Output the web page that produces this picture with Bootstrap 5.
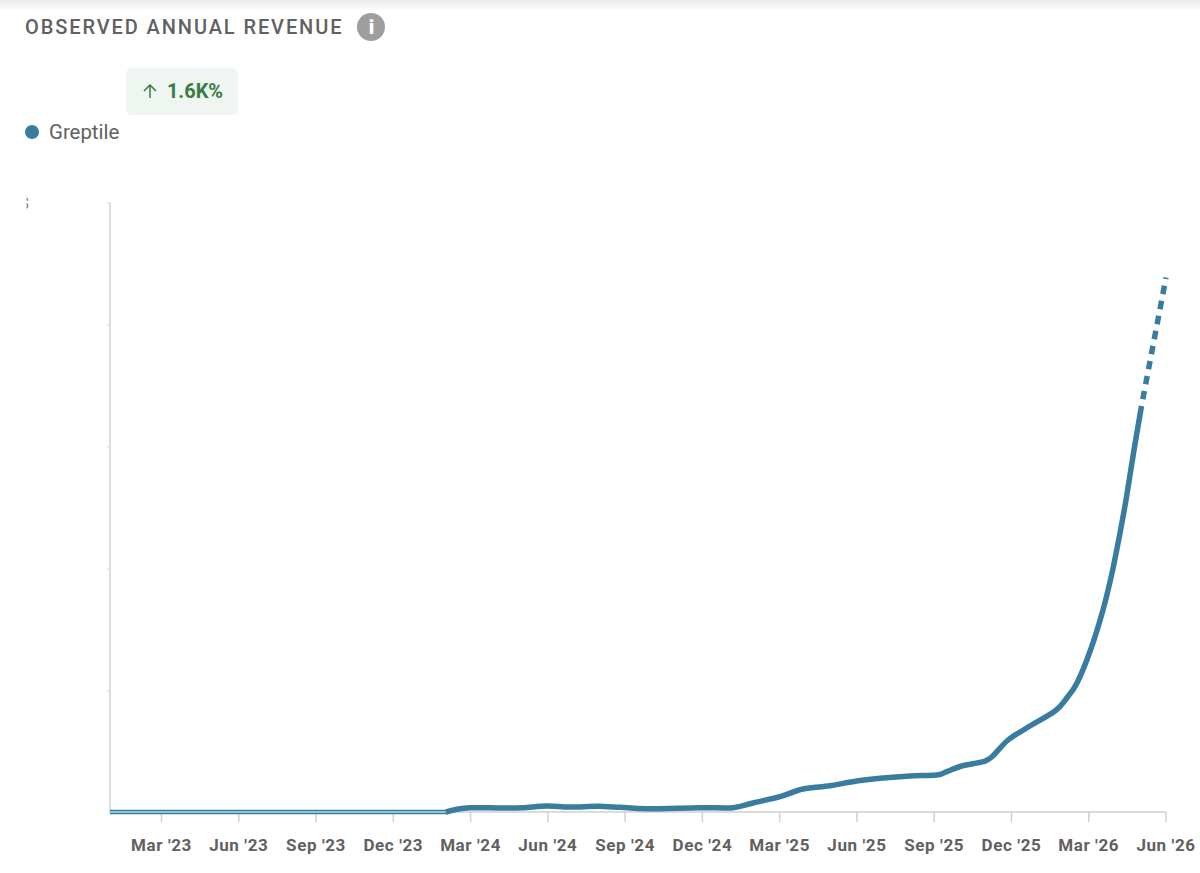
<!DOCTYPE html>
<html lang="en">
<head>
  <meta charset="UTF-8" />
  <meta name="viewport" content="width=device-width, initial-scale=1.0" />
  <title>Observed Annual Revenue</title>
  <link href="https://cdn.jsdelivr.net/npm/bootstrap@5.3.0/dist/css/bootstrap.min.css" rel="stylesheet">
  <style>
    html, body {
      height: 100%;
      overflow: hidden;
    }

    body {
      background: #fff;
      font-family: Roboto, "Liberation Sans", sans-serif;
      color: #616161;
    }

    .top-shade {
      height: 12px;
      background: linear-gradient(to bottom, #eaeaea, #fff);
    }

    .chart-head {
      padding-left: 25px;
      height: 191px;
    }

    .chart-title {
      font-size: 20px;
      font-weight: 500;
      letter-spacing: 1.9px;
      line-height: 30px;
    }

    .info-dot {
      width: 28px;
      height: 28px;
      background: #9e9e9e;
      color: #fff;
      font-family: Roboto, "Liberation Sans", sans-serif;
      font-weight: 900;
      font-size: 20px;
      line-height: 1;
      margin-left: 14px;
    }

    .change-box {
      width: 112px;
      height: 47px;
      margin-left: 101px;
      margin-top: 26px;
      padding-left: 2px;
      padding-bottom: 1px;
      background: #eff5f0;
      color: #3a7d44;
      font-size: 20px;
      font-weight: 700;
      gap: 10px;
    }

    .legend-row {
      font-size: 20.4px;
      line-height: 24px;
      margin-top: 5px;
      gap: 10px;
    }

    .legend-dot {
      width: 14px;
      height: 14px;
      background: #3a7ca0;
    }

    .chart-svg {
      display: block;
      width: 1200px;
      height: 680px;
      margin-top: -10px;
    }

    .tick-label {
      font-family: Roboto, "Liberation Sans", sans-serif;
      font-size: 17px;
      font-weight: 700;
      letter-spacing: .6px;
      fill: #616161;
      text-anchor: middle;
    }

    .cut-label {
      font-family: Roboto, "Liberation Sans", sans-serif;
      font-size: 16px;
      fill: #757575;
    }
  </style>
</head>
<body>
  <div class="top-shade"></div>

  <div class="chart-head">
    <div class="d-flex align-items-center">
      <span class="chart-title">OBSERVED ANNUAL REVENUE</span>
      <span class="info-dot rounded-circle d-flex align-items-center justify-content-center">i</span>
    </div>
    <div class="change-box rounded d-flex align-items-center justify-content-center">
      <svg width="14" height="14" viewBox="0 0 14 14" fill="none" stroke="#3a7d44" stroke-width="1.5"><path d="M7 14V1M1 7 7 1l6 6"/></svg>
      <span>1.6K%</span>
    </div>
    <div class="legend-row d-flex align-items-center">
      <span class="legend-dot rounded-circle"></span>
      <span>Greptile</span>
    </div>
  </div>

  <!-- svg origin is y=193 of the page, so coordinates below are page pixels -->
  <svg class="chart-svg" id="chart" viewBox="0 193 1200 680"></svg>

  <script>
    const ticks = ["Mar '23", "Jun '23", "Sep '23", "Dec '23", "Mar '24", "Jun '24", "Sep '24", "Dec '24", "Mar '25", "Jun '25", "Sep '25", "Dec '25", "Mar '26", "Jun '26"];

    // solid part of the series, read off the picture
    const points = [
      [446, 812], [456, 809.5], [470, 807.7], [503, 808], [523, 807.7], [546.7, 806], [570, 807], [598, 806.3],
      [620, 807.3], [646.7, 808.7], [700, 807.7], [733, 807.7], [753, 803], [780, 796.7], [803, 789],
      [830, 785.7], [856.7, 781], [883, 778], [910, 776], [936.7, 775], [946.7, 771.7], [961.7, 766],
      [983, 761.7], [991.7, 757], [1008, 740], [1026.7, 728], [1055, 711], [1066, 699], [1077, 683],
      [1090.5, 650], [1103, 610], [1112, 573], [1120, 533], [1126.5, 497], [1134, 450], [1141.5, 406]
    ];

    function smoothPath(pts) {
      let d = `M${pts[0][0]} ${pts[0][1]}`;
      for (let i = 0; i < pts.length - 1; i++) {
        const p0 = pts[Math.max(i - 1, 0)];
        const p1 = pts[i];
        const p2 = pts[i + 1];
        const p3 = pts[Math.min(i + 2, pts.length - 1)];
        const c1x = p1[0] + (p2[0] - p0[0]) / 6;
        const c1y = p1[1] + (p2[1] - p0[1]) / 6;
        const c2x = p2[0] - (p3[0] - p1[0]) / 6;
        const c2y = p2[1] - (p3[1] - p1[1]) / 6;
        d += `C${c1x} ${c1y} ${c2x} ${c2y} ${p2[0]} ${p2[1]}`;
      }
      return d;
    }

    // the y axis label is cut off by its container, only a sliver of it shows
    let html = '<defs><clipPath id="cut"><rect x="26.5" y="196" width="3" height="14"/></clipPath></defs>';
    html += '<text class="cut-label" x="20" y="209" clip-path="url(#cut)">$</text>';
    html += '<path d="M110 203V812H1166" fill="none" stroke="#d0d0d0" stroke-width="1.5"/>';

    [203, 325, 447, 569, 691].forEach(y => {
      html += `<path d="M107 ${y}H110" stroke="#e2e2e2" stroke-width="1.5"/>`;
    });

    ticks.forEach((t, i) => {
      const x = 161.5 + i * 77.27;
      html += `<path d="M${x} 812V822" stroke="#d0d0d0" stroke-width="1.5"/>`;
      html += `<text class="tick-label" x="${x}" y="851">${t}</text>`;
    });

    // flat stretch: dark edges around a light core
    html += '<path d="M110 812H448" stroke="#3a7ca0" stroke-width="4.5" fill="none"/>';
    html += '<path d="M110 812H446" stroke="#b5d8e8" stroke-width="1.6" fill="none"/>';
    html += `<path d="${smoothPath(points)}" fill="none" stroke="#3a7ca0" stroke-width="5.5" stroke-linejoin="round"/>`;
    html += '<path d="M1141.5 406 1166 277.5" fill="none" stroke="#3a7ca0" stroke-width="5.5" stroke-dasharray="8.5 6.8" stroke-dashoffset="8.5"/>';

    document.getElementById("chart").innerHTML = html;
  </script>
  <script src="https://cdn.jsdelivr.net/npm/bootstrap@5.3.0/dist/js/bootstrap.bundle.min.js"></script>
</body>
</html>
